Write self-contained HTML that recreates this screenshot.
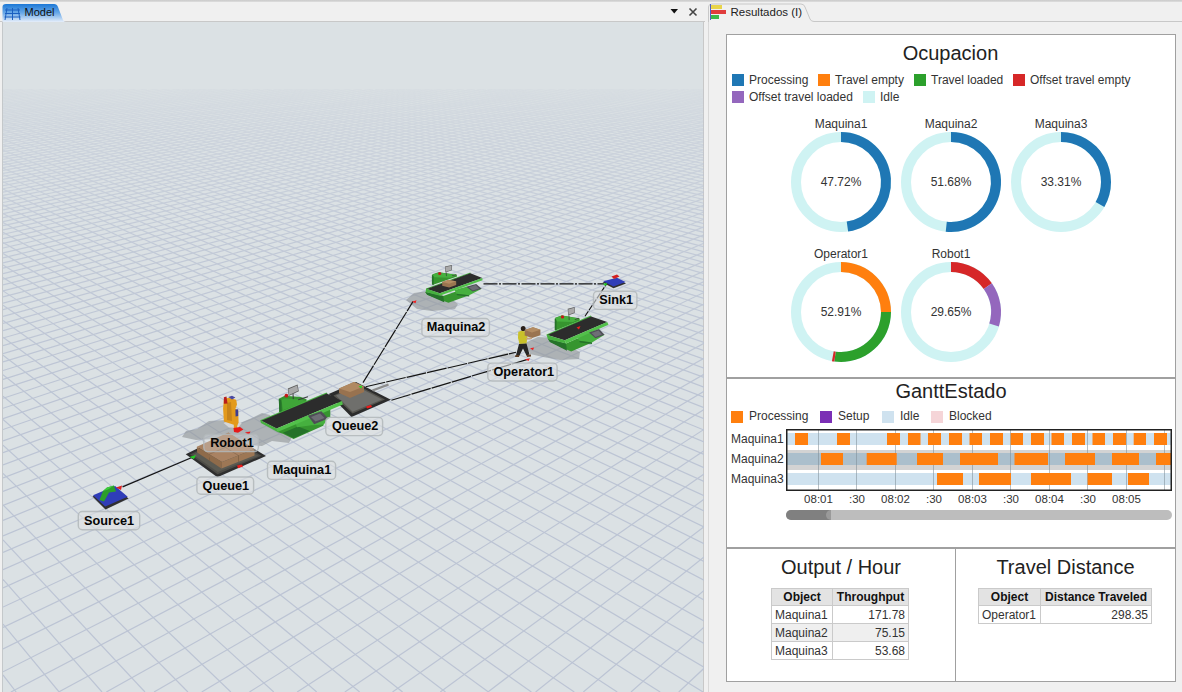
<!DOCTYPE html>
<html><head><meta charset="utf-8"><style>
*{margin:0;padding:0;box-sizing:border-box}
html,body{width:1182px;height:692px;overflow:hidden;background:#f0f0f0;font-family:"Liberation Sans", sans-serif;}
.abs{position:absolute}
</style></head><body>

<div class="abs" style="left:0;top:0;width:1182px;height:2px;background:linear-gradient(#c9c9c9,#dedede)"></div>
<div class="abs" style="left:2px;top:21px;width:702px;height:673px;border:1px solid #c4c8ca;border-right-color:#c8c8c8;background:#dbe1e4;overflow:hidden"></div>
<svg class="abs" style="left:0;top:0" width="1182" height="692" viewBox="0 0 1182 692">
<defs><linearGradient id="fog" x1="0" y1="89" x2="0" y2="692" gradientUnits="userSpaceOnUse"><stop offset="0" stop-color="#fff" stop-opacity="0.12"/><stop offset="0.08" stop-color="#fff" stop-opacity="0.45"/><stop offset="0.25" stop-color="#fff" stop-opacity="0.8"/><stop offset="0.5" stop-color="#fff" stop-opacity="1"/></linearGradient><mask id="fogm"><rect x="0" y="89" width="705" height="603" fill="url(#fog)"/></mask><clipPath id="vp"><rect x="3" y="22" width="701" height="670"/></clipPath></defs>
<g clip-path="url(#vp)"><g mask="url(#fogm)" stroke="#bcc4d4" stroke-width="1.2" fill="none">
<line x1="3.00" y1="90.05" x2="11.51" y2="89.00"/>
<line x1="3.00" y1="91.47" x2="22.81" y2="89.00"/>
<line x1="3.00" y1="92.91" x2="34.10" y2="89.00"/>
<line x1="3.00" y1="94.37" x2="45.40" y2="89.00"/>
<line x1="3.00" y1="95.86" x2="56.69" y2="89.00"/>
<line x1="3.00" y1="97.37" x2="67.99" y2="89.00"/>
<line x1="3.00" y1="98.90" x2="79.28" y2="89.00"/>
<line x1="3.00" y1="100.45" x2="90.58" y2="89.00"/>
<line x1="3.00" y1="102.03" x2="101.88" y2="89.00"/>
<line x1="3.00" y1="103.64" x2="113.17" y2="89.00"/>
<line x1="3.00" y1="105.27" x2="124.47" y2="89.00"/>
<line x1="3.00" y1="106.93" x2="135.76" y2="89.00"/>
<line x1="3.00" y1="108.61" x2="147.06" y2="89.00"/>
<line x1="3.00" y1="110.33" x2="158.35" y2="89.00"/>
<line x1="3.00" y1="112.07" x2="169.65" y2="89.00"/>
<line x1="3.00" y1="113.84" x2="180.94" y2="89.00"/>
<line x1="3.00" y1="115.64" x2="192.24" y2="89.00"/>
<line x1="3.00" y1="117.47" x2="203.54" y2="89.00"/>
<line x1="3.00" y1="119.33" x2="214.83" y2="89.00"/>
<line x1="3.00" y1="121.23" x2="226.13" y2="89.00"/>
<line x1="3.00" y1="123.16" x2="237.42" y2="89.00"/>
<line x1="3.00" y1="125.12" x2="248.72" y2="89.00"/>
<line x1="3.00" y1="127.12" x2="260.01" y2="89.00"/>
<line x1="3.00" y1="129.16" x2="271.31" y2="89.00"/>
<line x1="3.00" y1="131.23" x2="282.61" y2="89.00"/>
<line x1="3.00" y1="133.34" x2="293.90" y2="89.00"/>
<line x1="3.00" y1="135.49" x2="305.20" y2="89.00"/>
<line x1="3.00" y1="137.68" x2="316.49" y2="89.00"/>
<line x1="3.00" y1="139.91" x2="327.79" y2="89.00"/>
<line x1="3.00" y1="142.19" x2="339.08" y2="89.00"/>
<line x1="3.00" y1="144.50" x2="350.38" y2="89.00"/>
<line x1="3.00" y1="146.87" x2="361.67" y2="89.00"/>
<line x1="3.00" y1="149.28" x2="372.97" y2="89.00"/>
<line x1="3.00" y1="151.73" x2="384.27" y2="89.00"/>
<line x1="3.00" y1="154.24" x2="395.56" y2="89.00"/>
<line x1="3.00" y1="156.80" x2="406.86" y2="89.00"/>
<line x1="3.00" y1="159.41" x2="418.15" y2="89.00"/>
<line x1="3.00" y1="162.07" x2="429.45" y2="89.00"/>
<line x1="3.00" y1="164.79" x2="440.74" y2="89.00"/>
<line x1="3.00" y1="167.57" x2="452.04" y2="89.00"/>
<line x1="3.00" y1="170.40" x2="463.33" y2="89.00"/>
<line x1="3.00" y1="173.30" x2="474.63" y2="89.00"/>
<line x1="3.00" y1="176.26" x2="485.93" y2="89.00"/>
<line x1="3.00" y1="179.29" x2="497.22" y2="89.00"/>
<line x1="3.00" y1="182.38" x2="508.52" y2="89.00"/>
<line x1="3.00" y1="185.55" x2="519.81" y2="89.00"/>
<line x1="3.00" y1="188.78" x2="531.11" y2="89.00"/>
<line x1="3.00" y1="192.09" x2="542.40" y2="89.00"/>
<line x1="3.00" y1="195.48" x2="553.70" y2="89.00"/>
<line x1="3.00" y1="198.95" x2="564.99" y2="89.00"/>
<line x1="3.00" y1="202.50" x2="576.29" y2="89.00"/>
<line x1="3.00" y1="206.13" x2="587.59" y2="89.00"/>
<line x1="3.00" y1="209.86" x2="598.88" y2="89.00"/>
<line x1="3.00" y1="213.68" x2="610.18" y2="89.00"/>
<line x1="3.00" y1="217.59" x2="621.47" y2="89.00"/>
<line x1="3.00" y1="221.60" x2="632.77" y2="89.00"/>
<line x1="3.00" y1="225.72" x2="644.06" y2="89.00"/>
<line x1="3.00" y1="229.94" x2="655.36" y2="89.00"/>
<line x1="3.00" y1="234.28" x2="666.66" y2="89.00"/>
<line x1="3.00" y1="238.73" x2="677.95" y2="89.00"/>
<line x1="3.00" y1="243.30" x2="689.25" y2="89.00"/>
<line x1="3.00" y1="248.00" x2="700.54" y2="89.00"/>
<line x1="3.00" y1="252.83" x2="704.00" y2="90.81"/>
<line x1="3.00" y1="257.80" x2="704.00" y2="93.48"/>
<line x1="3.00" y1="262.90" x2="704.00" y2="96.23"/>
<line x1="3.00" y1="268.16" x2="704.00" y2="99.06"/>
<line x1="3.00" y1="273.57" x2="704.00" y2="101.98"/>
<line x1="3.00" y1="279.15" x2="704.00" y2="104.98"/>
<line x1="3.00" y1="284.89" x2="704.00" y2="108.07"/>
<line x1="3.00" y1="290.82" x2="704.00" y2="111.26"/>
<line x1="3.00" y1="296.93" x2="704.00" y2="114.55"/>
<line x1="3.00" y1="303.23" x2="704.00" y2="117.94"/>
<line x1="3.00" y1="309.74" x2="704.00" y2="121.45"/>
<line x1="3.00" y1="316.46" x2="704.00" y2="125.06"/>
<line x1="3.00" y1="323.41" x2="704.00" y2="128.80"/>
<line x1="3.00" y1="330.59" x2="704.00" y2="132.67"/>
<line x1="3.00" y1="338.03" x2="704.00" y2="136.67"/>
<line x1="3.00" y1="345.73" x2="704.00" y2="140.82"/>
<line x1="3.00" y1="353.70" x2="704.00" y2="145.11"/>
<line x1="3.00" y1="361.96" x2="704.00" y2="149.56"/>
<line x1="3.00" y1="370.54" x2="704.00" y2="154.17"/>
<line x1="3.00" y1="379.43" x2="704.00" y2="158.96"/>
<line x1="3.00" y1="388.68" x2="704.00" y2="163.94"/>
<line x1="3.00" y1="398.29" x2="704.00" y2="169.11"/>
<line x1="3.00" y1="408.28" x2="704.00" y2="174.49"/>
<line x1="3.00" y1="418.69" x2="704.00" y2="180.09"/>
<line x1="3.00" y1="429.53" x2="704.00" y2="185.93"/>
<line x1="3.00" y1="440.84" x2="704.00" y2="192.02"/>
<line x1="3.00" y1="452.64" x2="704.00" y2="198.37"/>
<line x1="3.00" y1="464.97" x2="704.00" y2="205.01"/>
<line x1="3.00" y1="477.86" x2="704.00" y2="211.95"/>
<line x1="3.00" y1="491.36" x2="704.00" y2="219.22"/>
<line x1="3.00" y1="505.51" x2="704.00" y2="226.83"/>
<line x1="3.00" y1="520.35" x2="704.00" y2="234.82"/>
<line x1="3.00" y1="535.95" x2="704.00" y2="243.22"/>
<line x1="3.00" y1="552.35" x2="704.00" y2="252.04"/>
<line x1="3.00" y1="569.62" x2="704.00" y2="261.34"/>
<line x1="3.00" y1="674.94" x2="16.15" y2="692.00"/>
<line x1="3.00" y1="587.83" x2="704.00" y2="271.14"/>
<line x1="3.00" y1="624.01" x2="59.08" y2="692.00"/>
<line x1="3.00" y1="607.06" x2="704.00" y2="281.50"/>
<line x1="3.00" y1="579.38" x2="102.02" y2="692.00"/>
<line x1="3.00" y1="627.40" x2="704.00" y2="292.45"/>
<line x1="3.00" y1="539.94" x2="144.95" y2="692.00"/>
<line x1="3.00" y1="648.95" x2="704.00" y2="304.05"/>
<line x1="3.00" y1="504.84" x2="187.89" y2="692.00"/>
<line x1="3.00" y1="671.83" x2="704.00" y2="316.36"/>
<line x1="3.00" y1="473.41" x2="230.83" y2="692.00"/>
<line x1="10.92" y1="692.00" x2="704.00" y2="329.45"/>
<line x1="3.00" y1="445.09" x2="273.76" y2="692.00"/>
<line x1="58.62" y1="692.00" x2="704.00" y2="343.39"/>
<line x1="3.00" y1="419.44" x2="316.70" y2="692.00"/>
<line x1="106.32" y1="692.00" x2="704.00" y2="358.27"/>
<line x1="3.00" y1="396.10" x2="359.63" y2="692.00"/>
<line x1="154.02" y1="692.00" x2="704.00" y2="374.20"/>
<line x1="3.00" y1="374.78" x2="402.57" y2="692.00"/>
<line x1="201.72" y1="692.00" x2="704.00" y2="391.27"/>
<line x1="3.00" y1="355.23" x2="445.51" y2="692.00"/>
<line x1="249.42" y1="692.00" x2="704.00" y2="409.62"/>
<line x1="3.00" y1="337.22" x2="488.44" y2="692.00"/>
<line x1="297.13" y1="692.00" x2="704.00" y2="429.40"/>
<line x1="3.00" y1="320.59" x2="531.38" y2="692.00"/>
<line x1="344.83" y1="692.00" x2="704.00" y2="450.79"/>
<line x1="3.00" y1="305.19" x2="574.31" y2="692.00"/>
<line x1="392.53" y1="692.00" x2="704.00" y2="473.99"/>
<line x1="3.00" y1="290.88" x2="617.25" y2="692.00"/>
<line x1="440.23" y1="692.00" x2="704.00" y2="499.23"/>
<line x1="3.00" y1="277.55" x2="660.19" y2="692.00"/>
<line x1="487.93" y1="692.00" x2="704.00" y2="526.80"/>
<line x1="3.00" y1="265.10" x2="703.12" y2="692.00"/>
<line x1="535.63" y1="692.00" x2="704.00" y2="557.04"/>
<line x1="3.00" y1="253.45" x2="704.00" y2="667.18"/>
<line x1="583.34" y1="692.00" x2="704.00" y2="590.36"/>
<line x1="3.00" y1="242.53" x2="704.00" y2="643.40"/>
<line x1="631.04" y1="692.00" x2="704.00" y2="627.25"/>
<line x1="3.00" y1="232.26" x2="704.00" y2="621.05"/>
<line x1="678.74" y1="692.00" x2="704.00" y2="668.31"/>
<line x1="3.00" y1="222.59" x2="704.00" y2="600.01"/>
<line x1="3.00" y1="213.48" x2="704.00" y2="580.16"/>
<line x1="3.00" y1="204.87" x2="704.00" y2="561.42"/>
<line x1="3.00" y1="196.72" x2="704.00" y2="543.68"/>
<line x1="3.00" y1="189.00" x2="704.00" y2="526.87"/>
<line x1="3.00" y1="181.67" x2="704.00" y2="510.92"/>
<line x1="3.00" y1="174.71" x2="704.00" y2="495.76"/>
<line x1="3.00" y1="168.08" x2="704.00" y2="481.34"/>
<line x1="3.00" y1="161.77" x2="704.00" y2="467.60"/>
<line x1="3.00" y1="155.75" x2="704.00" y2="454.50"/>
<line x1="3.00" y1="150.01" x2="704.00" y2="441.99"/>
<line x1="3.00" y1="144.51" x2="704.00" y2="430.04"/>
<line x1="3.00" y1="139.26" x2="704.00" y2="418.60"/>
<line x1="3.00" y1="134.23" x2="704.00" y2="407.65"/>
<line x1="3.00" y1="129.41" x2="704.00" y2="397.15"/>
<line x1="3.00" y1="124.78" x2="704.00" y2="387.08"/>
<line x1="3.00" y1="120.34" x2="704.00" y2="377.41"/>
<line x1="3.00" y1="116.07" x2="704.00" y2="368.12"/>
<line x1="3.00" y1="111.97" x2="704.00" y2="359.19"/>
<line x1="3.00" y1="108.02" x2="704.00" y2="350.59"/>
<line x1="3.00" y1="104.21" x2="704.00" y2="342.31"/>
<line x1="3.00" y1="100.55" x2="704.00" y2="334.32"/>
<line x1="3.00" y1="97.01" x2="704.00" y2="326.63"/>
<line x1="3.00" y1="93.60" x2="704.00" y2="319.20"/>
<line x1="3.00" y1="90.30" x2="704.00" y2="312.03"/>
<line x1="9.04" y1="89.00" x2="704.00" y2="305.10"/>
<line x1="19.21" y1="89.00" x2="704.00" y2="298.40"/>
<line x1="29.38" y1="89.00" x2="704.00" y2="291.92"/>
<line x1="39.54" y1="89.00" x2="704.00" y2="285.64"/>
<line x1="49.71" y1="89.00" x2="704.00" y2="279.57"/>
<line x1="59.88" y1="89.00" x2="704.00" y2="273.69"/>
<line x1="70.04" y1="89.00" x2="704.00" y2="267.98"/>
<line x1="80.21" y1="89.00" x2="704.00" y2="262.45"/>
<line x1="90.38" y1="89.00" x2="704.00" y2="257.08"/>
<line x1="100.55" y1="89.00" x2="704.00" y2="251.87"/>
<line x1="110.71" y1="89.00" x2="704.00" y2="246.81"/>
<line x1="120.88" y1="89.00" x2="704.00" y2="241.90"/>
<line x1="131.05" y1="89.00" x2="704.00" y2="237.12"/>
<line x1="141.21" y1="89.00" x2="704.00" y2="232.48"/>
<line x1="151.38" y1="89.00" x2="704.00" y2="227.96"/>
<line x1="161.55" y1="89.00" x2="704.00" y2="223.57"/>
<line x1="171.72" y1="89.00" x2="704.00" y2="219.29"/>
<line x1="181.88" y1="89.00" x2="704.00" y2="215.12"/>
<line x1="192.05" y1="89.00" x2="704.00" y2="211.06"/>
<line x1="202.22" y1="89.00" x2="704.00" y2="207.11"/>
<line x1="212.38" y1="89.00" x2="704.00" y2="203.25"/>
<line x1="222.55" y1="89.00" x2="704.00" y2="199.50"/>
<line x1="232.72" y1="89.00" x2="704.00" y2="195.83"/>
<line x1="242.89" y1="89.00" x2="704.00" y2="192.25"/>
<line x1="253.05" y1="89.00" x2="704.00" y2="188.76"/>
<line x1="263.22" y1="89.00" x2="704.00" y2="185.36"/>
<line x1="273.39" y1="89.00" x2="704.00" y2="182.03"/>
<line x1="283.55" y1="89.00" x2="704.00" y2="178.78"/>
<line x1="293.72" y1="89.00" x2="704.00" y2="175.60"/>
<line x1="303.89" y1="89.00" x2="704.00" y2="172.50"/>
<line x1="314.06" y1="89.00" x2="704.00" y2="169.46"/>
<line x1="324.22" y1="89.00" x2="704.00" y2="166.50"/>
<line x1="334.39" y1="89.00" x2="704.00" y2="163.59"/>
<line x1="344.56" y1="89.00" x2="704.00" y2="160.76"/>
<line x1="354.72" y1="89.00" x2="704.00" y2="157.98"/>
<line x1="364.89" y1="89.00" x2="704.00" y2="155.26"/>
<line x1="375.06" y1="89.00" x2="704.00" y2="152.60"/>
<line x1="385.23" y1="89.00" x2="704.00" y2="149.99"/>
<line x1="395.39" y1="89.00" x2="704.00" y2="147.44"/>
<line x1="405.56" y1="89.00" x2="704.00" y2="144.94"/>
<line x1="415.73" y1="89.00" x2="704.00" y2="142.49"/>
<line x1="425.89" y1="89.00" x2="704.00" y2="140.08"/>
<line x1="436.06" y1="89.00" x2="704.00" y2="137.73"/>
<line x1="446.23" y1="89.00" x2="704.00" y2="135.42"/>
<line x1="456.39" y1="89.00" x2="704.00" y2="133.16"/>
<line x1="466.56" y1="89.00" x2="704.00" y2="130.94"/>
<line x1="476.73" y1="89.00" x2="704.00" y2="128.76"/>
<line x1="486.90" y1="89.00" x2="704.00" y2="126.63"/>
<line x1="497.06" y1="89.00" x2="704.00" y2="124.53"/>
<line x1="507.23" y1="89.00" x2="704.00" y2="122.47"/>
<line x1="517.40" y1="89.00" x2="704.00" y2="120.45"/>
<line x1="527.56" y1="89.00" x2="704.00" y2="118.47"/>
<line x1="537.73" y1="89.00" x2="704.00" y2="116.52"/>
<line x1="547.90" y1="89.00" x2="704.00" y2="114.61"/>
<line x1="558.07" y1="89.00" x2="704.00" y2="112.73"/>
<line x1="568.23" y1="89.00" x2="704.00" y2="110.88"/>
<line x1="578.40" y1="89.00" x2="704.00" y2="109.07"/>
<line x1="588.57" y1="89.00" x2="704.00" y2="107.28"/>
<line x1="598.73" y1="89.00" x2="704.00" y2="105.53"/>
<line x1="608.90" y1="89.00" x2="704.00" y2="103.81"/>
<line x1="619.07" y1="89.00" x2="704.00" y2="102.11"/>
<line x1="629.24" y1="89.00" x2="704.00" y2="100.45"/>
<line x1="639.40" y1="89.00" x2="704.00" y2="98.81"/>
<line x1="649.57" y1="89.00" x2="704.00" y2="97.20"/>
<line x1="659.74" y1="89.00" x2="704.00" y2="95.61"/>
<line x1="669.90" y1="89.00" x2="704.00" y2="94.05"/>
<line x1="680.07" y1="89.00" x2="704.00" y2="92.52"/>
<line x1="690.24" y1="89.00" x2="704.00" y2="91.01"/>
<line x1="700.41" y1="89.00" x2="704.00" y2="89.52"/>
</g>
<polygon points="182.0,437.0 186.0,431.0 197.0,429.0 209.0,421.0 226.0,420.0 240.0,423.0 252.0,418.0 262.0,413.0 270.0,415.0 276.0,427.0 292.0,437.0 289.0,443.0 272.0,441.0 262.0,446.0 248.0,445.0 235.0,437.0 214.0,439.0 196.0,440.0" fill="#8e9396" fill-opacity="0.6"/>
<polygon points="406.0,300.0 414.0,293.0 428.0,291.0 448.0,297.0 458.0,304.0 455.0,309.0 432.0,311.0 417.0,309.0" fill="#8e9396" fill-opacity="0.6"/>
<polygon points="525.0,343.0 538.0,337.0 553.0,338.0 568.0,346.0 580.0,352.0 579.0,359.0 560.0,360.0 543.0,357.0 530.0,354.0" fill="#8e9396" fill-opacity="0.6"/>
<polygon points="497.0,356.0 505.0,353.0 514.0,353.0 515.0,357.0 506.0,359.0" fill="#8e9396" fill-opacity="0.35"/>
<line x1="122.6" y1="486.9" x2="192.5" y2="457.2" stroke="#141414" stroke-width="1.15" fill="none"/>
<line x1="363" y1="382.6" x2="413.1" y2="301.4" stroke="#141414" stroke-width="1.15" fill="none" stroke-dasharray="20,1"/>
<line x1="365.7" y1="386.7" x2="516" y2="352.3" stroke="#141414" stroke-width="1.15" fill="none" stroke-dasharray="20,1"/>
<line x1="391.4" y1="400.2" x2="526.8" y2="359.6" stroke="#141414" stroke-width="1.15" fill="none" stroke-dasharray="20,1"/>
<line x1="483.5" y1="283.8" x2="604" y2="283.8" stroke="#141414" stroke-width="1.15" fill="none" stroke-width="1.5" stroke-dasharray="14,1.5,2,1.5"/>
<line x1="585" y1="316.3" x2="606.6" y2="283.8" stroke="#141414" stroke-width="1.15" fill="none" stroke-dasharray="6,1.2"/>
<polygon points="92.5,496.5 115.0,487.0 128.5,498.5 105.5,509.5" fill="#303030" />
<polygon points="93.0,495.2 115.1,486.0 127.7,496.8 105.2,506.5" fill="#2f3db8" />
<polygon points="99.5,500.0 103.0,491.0 107.0,487.5 114.0,485.5 116.0,491.5 109.0,492.5 104.0,501.5" fill="#2b9e2b" />
<polygon points="103.0,491.0 107.0,487.5 114.0,485.5 108.0,489.5" fill="#3ccc3c" />
<polygon points="116.0,487.5 122.0,485.5 121.0,490.0" fill="#e02020" />
<polygon points="185.7,454.2 228.1,433.2 266.0,455.9 217.4,477.3" fill="#2e2e2e" />
<polygon points="190.0,454.6 228.1,436.0 261.5,455.8 217.6,474.3" fill="#4c4b46" />
<polygon points="193.0,454.7 228.1,438.2 258.5,455.8 217.8,472.0" fill="#5b5a52" />
<polygon points="196.8,446.8 228.5,432.5 254.5,449.0 222.0,462.0" fill="#a98262" />
<polygon points="196.8,446.8 222.0,462.0 221.5,468.6 197.2,452.6" fill="#8f6b4a" />
<polygon points="222.0,462.0 254.5,449.0 254.5,455.5 221.5,468.6" fill="#9d7755" />
<line x1="212.5" y1="439.6" x2="238.5" y2="455.5" stroke="#85654a" stroke-width="0.7"/>
<line x1="209" y1="454.3" x2="241.5" y2="440.7" stroke="#85654a" stroke-width="0.7"/>
<line x1="209.5" y1="457.5" x2="209.5" y2="461" stroke="#7a5c40" stroke-width="0.7"/>
<line x1="238.5" y1="455.5" x2="238.5" y2="462" stroke="#7a5c40" stroke-width="0.7"/>
<polygon points="189.5,457.0 196.0,455.0 194.0,459.0" fill="#22cc22" />
<polygon points="237.0,465.5 242.0,464.5 243.0,466.5 238.0,468.2" fill="#ee1a1a" />
<polygon points="223.5,423.0 230.0,420.5 241.8,423.0 238.0,427.9 229.0,427.5" fill="#d6d6d6" />
<polygon points="223.9,399.3 228.7,397.7 236.2,399.7 237.0,404.5 235.4,408.8 238.2,410.4 238.6,422.4 237.0,426.3 233.8,424.7 223.9,421.6 223.1,408.8" fill="#e39a1c" />
<polygon points="227.0,403.0 231.0,402.0 232.0,421.0 227.0,420.0" fill="#c7841a" />
<polygon points="228.3,397.0 232.0,395.8 235.4,397.5 232.0,399.5" fill="#4a48a0" />
<polygon points="223.9,397.2 226.5,396.5 227.5,403.5 223.9,403.7" fill="#b81e1e" />
<polygon points="235.4,409.6 238.2,409.2 238.2,416.0 235.6,416.5" fill="#3e3e90" />
<polygon points="233.8,424.7 237.0,424.5 237.4,430.0 234.0,431.0" fill="#e39a1c" />
<polygon points="233.5,428.0 240.0,427.0 243.4,429.5 238.0,432.7 234.0,432.0" fill="#e61a1a" />
<polygon points="245.0,432.5 250.5,431.5 249.0,434.7" fill="#e61a1a" />
<polygon points="328.7,394.1 356.0,382.1 390.9,399.8 351.5,417.0" fill="#2c2c2c" />
<polygon points="333.5,395.5 357.5,385.3 385.0,399.5 352.5,413.5" fill="#56554f" />
<polygon points="336.0,395.6 357.5,386.8 382.0,399.4 352.6,411.8" fill="#6f6f6c" />
<polygon points="339.0,388.5 354.0,382.0 364.0,386.5 364.0,392.0 350.0,398.0 339.0,393.0" fill="#98724f" />
<polygon points="339.0,388.5 354.0,382.0 364.0,386.5 350.0,392.0" fill="#b08962" />
<polygon points="358.5,386.5 362.0,385.5 361.5,388.5" fill="#22dd22" />
<polygon points="366.0,406.5 371.0,405.0 372.0,407.0 367.0,408.5" fill="#ee1a1a" />
<polygon points="372.0,389.5 388.0,383.5 389.0,385.5 373.0,391.5" fill="#8c8c8c" />
<polygon points="278.8,398.8 284.7,395.7 300.8,397.0 306.5,399.3 306.5,402.0 281.0,413.0 279.3,412.0" fill="#36952f" />
<polygon points="278.8,398.8 281.5,400.0 281.8,412.5 279.3,412.0" fill="#25722a" />
<polygon points="281.5,400.0 284.7,398.5 300.8,399.5 306.5,401.5 283.0,410.0" fill="#46b03f" fill-opacity="0.6"/>
<polygon points="277.5,432.0 282.9,433.7 293.6,439.0 323.2,425.7 324.1,422.1 330.3,417.6 330.3,408.5 277.0,431.0" fill="#36952f" />
<polygon points="282.9,432.8 293.6,438.2 309.7,431.0 298.1,426.6" fill="#25722a" />
<polygon points="294.5,420.5 308.0,415.5 327.6,418.0 324.0,424.5 311.5,425.2 297.0,427.2" fill="#46b03f" />
<polygon points="260.2,420.2 326.5,392.5 327.5,393.8 261.5,421.6" fill="#46b03f" />
<polygon points="261.4,420.7 326.7,393.4 342.0,401.0 276.6,428.4" fill="#2c2c2c" />
<polygon points="276.6,428.4 342.0,401.0 342.9,404.6 277.5,432.0" fill="#52c04a" />
<polygon points="260.2,420.2 261.4,420.7 276.6,428.4 277.5,432.0 261.0,423.0" fill="#46b03f" />
<polygon points="287.8,388.5 297.6,384.5 298.8,391.2 288.7,396.1" fill="#5c5c5c" />
<polygon points="288.4,389.3 297.2,385.6 298.1,390.8 289.1,394.9" fill="#a9a9a9" />
<polygon points="292.5,394.0 293.5,393.6 293.8,399.0 292.8,399.3" fill="#3a3a3a" />
<polygon points="298.1,399.3 307.9,396.3 308.0,397.2 298.3,400.2" fill="#3a3a3a" />
<circle cx="286.4" cy="395.7" r="1.90" fill="#c41a1a"/>
<polygon points="307.9,415.8 321.4,411.3 328.1,418.5 314.2,424.3" fill="#4e4e56" />
<polygon points="311.0,417.0 320.0,413.5 324.5,418.0 315.5,421.5" fill="#6e6e76" />
<polygon points="432.4,274.2 438.9,272.2 445.8,273.2 456.7,274.8 457.1,276.6 433.2,284.8 432.4,284.8" fill="#36952f" />
<polygon points="431.9,274.9 433.7,275.6 433.7,285.0 431.9,284.5" fill="#25722a" />
<polygon points="432.7,274.4 438.9,272.4 445.8,273.3 456.7,275.0 450.2,277.8 434.2,277.3" fill="#46b03f" />
<polygon points="425.2,292.1 427.2,294.7 448.4,302.8 469.2,295.3 467.2,292.3 454.5,291.9 443.2,295.9" fill="#36952f" />
<polygon points="425.2,292.1 443.2,295.9 444.2,302.2 427.2,294.7" fill="#25722a" />
<polygon points="454.5,290.0 466.2,286.8 481.7,288.7 469.2,295.3 456.2,293.8" fill="#46b03f" />
<polygon points="456.2,293.8 469.2,295.3 469.2,296.5 457.2,295.2" fill="#25722a" />
<polygon points="426.1,288.4 470.4,272.6 470.5,273.7 426.4,289.6" fill="#46b03f" />
<polygon points="426.7,288.9 470.4,273.3 482.3,278.0 439.8,293.2" fill="#2c2c2c" />
<polygon points="439.8,293.2 482.3,278.0 482.5,280.2 439.9,295.8" fill="#52c04a" />
<polygon points="426.0,288.6 439.8,293.2 439.9,295.8 425.7,292.1" fill="#46b03f" />
<polygon points="445.8,272.4 446.5,272.2 446.7,276.1 446.0,276.3" fill="#3a3a3a" />
<polygon points="444.9,266.5 451.9,265.1 451.9,270.2 445.4,272.4" fill="#5c5c5c" />
<polygon points="445.4,267.1 451.4,265.8 451.4,269.9 445.8,271.7" fill="#a9a9a9" />
<polygon points="451.9,275.5 456.2,274.3 456.4,275.0 452.1,276.1" fill="#3a3a3a" />
<circle cx="439.7" cy="273.5" r="1.57" fill="#c41a1a"/>
<polygon points="466.2,286.8 476.2,283.9 481.7,288.7 472.7,291.6" fill="#4e4e56" />
<polygon points="468.7,287.2 475.7,285.1 479.1,288.5 472.7,290.6" fill="#6e6e76" />
<polygon points="442.2,282.0 448.2,279.9 456.2,281.2 456.2,285.0 449.2,287.6 442.2,285.8" fill="#9a7550" />
<polygon points="442.2,282.0 448.2,279.9 456.2,281.2 449.2,283.8" fill="#b38c62" />
<polygon points="412.0,301.8 416.5,300.2 415.5,303.2" fill="#ee2020" />
<polygon points="555.2,317.8 561.7,315.4 568.6,316.5 579.5,318.4 579.9,320.5 556.0,330.3 555.2,330.3" fill="#36952f" />
<polygon points="554.7,318.6 556.5,319.5 556.5,330.5 554.7,330.0" fill="#25722a" />
<polygon points="555.5,318.0 561.7,315.6 568.6,316.7 579.5,318.6 573.0,322.0 557.0,321.5" fill="#46b03f" />
<polygon points="548.0,339.0 550.0,342.0 571.2,351.5 592.0,342.5 590.0,339.0 577.3,338.6 566.0,343.4" fill="#36952f" />
<polygon points="548.0,339.0 566.0,343.4 567.0,350.8 550.0,342.0" fill="#25722a" />
<polygon points="577.3,336.4 589.0,332.5 604.6,334.7 592.0,342.5 579.0,340.8" fill="#46b03f" />
<polygon points="579.0,340.8 592.0,342.5 592.0,344.0 580.0,342.5" fill="#25722a" />
<polygon points="546.5,334.5 590.8,315.6 591.5,317.0 547.4,335.9" fill="#46b03f" />
<polygon points="547.4,335.1 591.2,316.5 607.2,322.1 564.7,340.3" fill="#2c2c2c" />
<polygon points="564.7,340.3 607.2,322.1 608.5,324.7 566.0,343.4" fill="#52c04a" />
<polygon points="546.5,334.8 564.7,340.3 566.0,343.4 547.8,339.0" fill="#46b03f" />
<polygon points="568.6,315.6 569.3,315.4 569.5,320.0 568.8,320.2" fill="#3a3a3a" />
<polygon points="567.7,308.7 574.7,306.9 574.7,313.0 568.2,315.6" fill="#5c5c5c" />
<polygon points="568.2,309.4 574.2,307.8 574.2,312.6 568.6,314.8" fill="#a9a9a9" />
<polygon points="574.7,319.2 579.0,317.8 579.2,318.6 574.9,320.0" fill="#3a3a3a" />
<circle cx="562.5" cy="316.9" r="1.70" fill="#c41a1a"/>
<polygon points="589.0,332.5 599.0,329.0 604.6,334.7 595.5,338.2" fill="#4e4e56" />
<polygon points="591.5,333.0 598.5,330.5 602.0,334.5 595.5,337.0" fill="#6e6e76" />
<polygon points="576.5,327.5 580.5,326.0 579.0,329.5" fill="#ee2020" />
<ellipse cx="523.2" cy="328.6" rx="2.4" ry="2.6" fill="#2a2018"/>
<polygon points="518.2,332.0 521.0,330.8 525.5,331.5 527.5,337.0 526.5,343.5 519.5,344.0 518.0,338.0" fill="#c9c12a" />
<polygon points="519.0,344.0 526.5,343.5 529.5,354.5 526.5,355.5 523.0,348.5 519.5,355.5 516.0,355.3" fill="#262626" />
<polygon points="515.5,355.0 519.5,355.0 519.0,357.0 515.0,357.0" fill="#5a3a20" />
<polygon points="526.5,355.0 531.0,354.5 531.0,356.5 527.0,357.0" fill="#5a3a20" />
<polygon points="524.7,330.0 533.0,327.3 540.4,329.8 540.4,335.2 532.0,338.0 524.7,335.5" fill="#9a7450" />
<polygon points="524.7,330.0 533.0,327.3 540.4,329.8 532.0,332.5" fill="#b38c62" />
<polygon points="526.0,338.0 532.0,337.5 532.0,339.0 526.0,339.5" fill="#c9a27a" />
<polygon points="530.0,348.2 534.0,347.5 533.0,350.3" fill="#ee2020" />
<polygon points="525.0,359.2 530.0,358.2 528.5,361.0" fill="#ee2020" />
<polygon points="602.5,282.5 616.9,278.8 626.0,283.5 613.5,288.3" fill="#303030" />
<polygon points="603.1,281.3 616.9,277.8 625.6,282.0 613.5,286.5" fill="#2f3db8" />
<polygon points="611.5,276.5 617.0,274.5 619.5,276.5 614.0,279.0" fill="#d42020" />
<polygon points="603.0,284.0 607.0,283.0 606.0,286.0" fill="#22dd22" />
<rect x="78.3" y="511.5" width="61.39999999999999" height="18.30000000000001" rx="4" fill="#dde1e3" fill-opacity="0.6" stroke="#b2b7ba" stroke-opacity="0.85" stroke-width="1.4"/><text x="84.1" y="524.9" font-size="12.7" font-weight="bold" fill="#050505" font-family='"Liberation Sans", sans-serif'>Source1</text>
<rect x="196.9" y="477.0" width="56.69999999999999" height="17.30000000000001" rx="4" fill="#dde1e3" fill-opacity="0.6" stroke="#b2b7ba" stroke-opacity="0.85" stroke-width="1.4"/><text x="202.6" y="489.6" font-size="12.7" font-weight="bold" fill="#050505" font-family='"Liberation Sans", sans-serif'>Queue1</text>
<rect x="203.8" y="434.2" width="54.599999999999966" height="17.399999999999977" rx="4" fill="#dde1e3" fill-opacity="0.3" stroke="#b2b7ba" stroke-opacity="0.85" stroke-width="1.4"/><text x="210.2" y="446.8" font-size="12.7" font-weight="bold" fill="#050505" font-family='"Liberation Sans", sans-serif'>Robot1</text>
<rect x="267.5" y="461.2" width="68.10000000000002" height="18.19999999999999" rx="4" fill="#dde1e3" fill-opacity="0.6" stroke="#b2b7ba" stroke-opacity="0.85" stroke-width="1.4"/><text x="272.7" y="474.2" font-size="12.7" font-weight="bold" fill="#050505" font-family='"Liberation Sans", sans-serif'>Maquina1</text>
<rect x="325.8" y="417.4" width="56.80000000000001" height="18.19999999999999" rx="4" fill="#dde1e3" fill-opacity="0.6" stroke="#b2b7ba" stroke-opacity="0.85" stroke-width="1.4"/><text x="331.9" y="429.6" font-size="12.7" font-weight="bold" fill="#050505" font-family='"Liberation Sans", sans-serif'>Queue2</text>
<rect x="421.9" y="318.5" width="67.5" height="18.0" rx="4" fill="#dde1e3" fill-opacity="0.6" stroke="#b2b7ba" stroke-opacity="0.85" stroke-width="1.4"/><text x="426.8" y="331.2" font-size="12.7" font-weight="bold" fill="#050505" font-family='"Liberation Sans", sans-serif'>Maquina2</text>
<rect x="487.8" y="363.09999999999997" width="69.30000000000001" height="17.900000000000034" rx="4" fill="#dde1e3" fill-opacity="0.6" stroke="#b2b7ba" stroke-opacity="0.85" stroke-width="1.4"/><text x="493.5" y="375.9" font-size="12.7" font-weight="bold" fill="#050505" font-family='"Liberation Sans", sans-serif'>Operator1</text>
<rect x="593.5" y="291.2" width="43.39999999999998" height="18.19999999999999" rx="4" fill="#dde1e3" fill-opacity="0.6" stroke="#b2b7ba" stroke-opacity="0.85" stroke-width="1.4"/><text x="599.3" y="304.2" font-size="12.7" font-weight="bold" fill="#050505" font-family='"Liberation Sans", sans-serif'>Sink1</text>
</g>
</svg>
<div class="abs" style="left:0;top:21px;width:705px;height:1px;background:#c8c8c8"></div>
<svg class="abs" style="left:0;top:0" width="1182" height="30">
<defs><linearGradient id="tabg" x1="0" y1="0" x2="0" y2="1"><stop offset="0" stop-color="#1c78d6"/><stop offset="0.5" stop-color="#6aa9e8"/><stop offset="1" stop-color="#e6eefa"/></linearGradient></defs>
<path d="M2.5,22 L2.5,7 Q2.5,4 6,4 L54,4 Q57,4 58,7 L63,20 Q64,22 66,22 Z" fill="url(#tabg)"/>
<g stroke="#1a5fc0" stroke-width="1" fill="none"><path d="M5,10 H20 M5,13.5 H20 M4.5,17 H20.5 M7,8 L5,20 M12.5,8 V20 M18,8 L20,20"/></g>
<text x="24.5" y="16" font-size="11" fill="#111" font-family='"Liberation Sans", sans-serif'>Model</text>
<path d="M670.5,9 L678,9 L674.25,13.5 Z" fill="#111"/>
<path d="M689.5,8.5 L696.5,15.5 M696.5,8.5 L689.5,15.5" stroke="#444" stroke-width="1.6"/>
<path d="M708.5,22 L708.5,7 Q708.5,4 712,4 L801,4 Q804,4 805,7 L810,19 Q811,21.5 814,21.5 L1182,21.5" fill="#f0f0f0" stroke="#c8c8c8" stroke-width="1"/>
<rect x="711" y="5" width="11" height="4" fill="#e8d44a"/><rect x="711" y="10" width="15" height="4" fill="#e03c3c"/><rect x="711" y="15" width="8" height="4" fill="#3cb84a"/>
<rect x="710" y="4" width="1" height="16" fill="#5060c0"/>
<text x="730.5" y="16" font-size="11.5" fill="#222" font-family='"Liberation Sans", sans-serif'>Resultados (I)</text>
</svg>
<div class="abs" style="left:708px;top:22px;width:1px;height:670px;background:#d8d8d8"></div>
<div class="abs" style="left:726px;top:34px;width:450px;height:344px;background:#fff;border:1px solid #a0a0a0"></div>
<div class="abs" style="left:726px;top:378px;width:450px;height:170px;background:#fff;border:1px solid #a0a0a0"></div>
<div class="abs" style="left:726px;top:548px;width:230px;height:134px;background:#fff;border:1px solid #a0a0a0"></div>
<div class="abs" style="left:955px;top:548px;width:221px;height:134px;background:#fff;border:1px solid #a0a0a0"></div>
<svg class="abs" style="left:0;top:0" width="1182" height="692" font-family='"Liberation Sans", sans-serif'>
<text x="950.5" y="60" text-anchor="middle" font-size="20" fill="#222">Ocupacion</text>
<rect x="732" y="74" width="12" height="12" fill="#1f77b4"/><text x="749" y="83.5" font-size="12" fill="#333">Processing</text>
<rect x="818" y="74" width="12" height="12" fill="#ff7f0e"/><text x="835" y="83.5" font-size="12" fill="#333">Travel empty</text>
<rect x="914" y="74" width="12" height="12" fill="#2ca02c"/><text x="931" y="83.5" font-size="12" fill="#333">Travel loaded</text>
<rect x="1013" y="74" width="12" height="12" fill="#d62728"/><text x="1030" y="83.5" font-size="12" fill="#333">Offset travel empty</text>
<rect x="732" y="91" width="12" height="12" fill="#9467bd"/><text x="749" y="100.5" font-size="12" fill="#333">Offset travel loaded</text>
<rect x="863" y="91" width="12" height="12" fill="#cff3f3"/><text x="880" y="100.5" font-size="12" fill="#333">Idle</text>
<circle cx="841" cy="182" r="45" fill="none" stroke="#cff3f3" stroke-width="10"/>
<path d="M841.00,132.00 A50,50 0 0 1 848.14,231.49 L846.71,221.59 A40,40 0 0 0 841.00,142.00 Z" fill="#1f77b4"/>
<text x="841" y="127.5" text-anchor="middle" font-size="12" fill="#333">Maquina1</text>
<text x="841" y="186" text-anchor="middle" font-size="12" fill="#333">47.72%</text>
<circle cx="951" cy="182" r="45" fill="none" stroke="#cff3f3" stroke-width="10"/>
<path d="M951.00,132.00 A50,50 0 1 1 945.73,231.72 L946.79,221.78 A40,40 0 1 0 951.00,142.00 Z" fill="#1f77b4"/>
<text x="951" y="127.5" text-anchor="middle" font-size="12" fill="#333">Maquina2</text>
<text x="951" y="186" text-anchor="middle" font-size="12" fill="#333">51.68%</text>
<circle cx="1061" cy="182" r="45" fill="none" stroke="#cff3f3" stroke-width="10"/>
<path d="M1061.00,132.00 A50,50 0 0 1 1104.34,206.94 L1095.67,201.95 A40,40 0 0 0 1061.00,142.00 Z" fill="#1f77b4"/>
<text x="1061" y="127.5" text-anchor="middle" font-size="12" fill="#333">Maquina3</text>
<text x="1061" y="186" text-anchor="middle" font-size="12" fill="#333">33.31%</text>
<circle cx="841" cy="312" r="45" fill="none" stroke="#cff3f3" stroke-width="10"/>
<path d="M841.00,262.00 A50,50 0 0 1 891.00,312.00 L881.00,312.00 A40,40 0 0 0 841.00,272.00 Z" fill="#ff7f0e"/>
<path d="M891.00,312.00 A50,50 0 0 1 834.39,361.56 L835.71,351.65 A40,40 0 0 0 881.00,312.00 Z" fill="#2ca02c"/>
<path d="M834.39,361.56 A50,50 0 0 1 831.91,361.17 L833.73,351.33 A40,40 0 0 0 835.71,351.65 Z" fill="#d62728"/>
<text x="841" y="257.5" text-anchor="middle" font-size="12" fill="#333">Operator1</text>
<text x="841" y="316" text-anchor="middle" font-size="12" fill="#333">52.91%</text>
<circle cx="951" cy="312" r="45" fill="none" stroke="#cff3f3" stroke-width="10"/>
<path d="M951.00,262.00 A50,50 0 0 1 991.91,283.25 L983.73,289.00 A40,40 0 0 0 951.00,272.00 Z" fill="#d62728"/>
<path d="M991.91,283.25 A50,50 0 0 1 998.88,326.40 L989.30,323.52 A40,40 0 0 0 983.73,289.00 Z" fill="#9467bd"/>
<text x="951" y="257.5" text-anchor="middle" font-size="12" fill="#333">Robot1</text>
<text x="951" y="316" text-anchor="middle" font-size="12" fill="#333">29.65%</text>
<text x="951" y="398" text-anchor="middle" font-size="20" fill="#222">GanttEstado</text>
<rect x="731" y="411" width="12" height="12" fill="#ff7f0e"/><text x="749" y="420" font-size="12" fill="#333">Processing</text>
<rect x="820" y="411" width="12" height="12" fill="#7b2fb5"/><text x="838" y="420" font-size="12" fill="#333">Setup</text>
<rect x="882" y="411" width="12" height="12" fill="#cfe2ef"/><text x="900" y="420" font-size="12" fill="#333">Idle</text>
<rect x="931" y="411" width="12" height="12" fill="#f5d5d8"/><text x="949" y="420" font-size="12" fill="#333">Blocked</text>
<rect x="787" y="430" width="384" height="60" fill="#fff"/>
<rect x="787" y="450" width="384" height="20" fill="#d3d3d3"/>
<rect x="787" y="433" width="384" height="12" fill="#cfe2ef"/>
<rect x="787" y="453" width="384" height="12" fill="#abbfcc"/>
<rect x="787" y="473" width="384" height="12" fill="#cfe2ef"/>
<line x1="818.5" y1="430" x2="818.5" y2="490" stroke="#7d8c96" stroke-opacity="0.55" stroke-width="1"/>
<line x1="856.5" y1="430" x2="856.5" y2="490" stroke="#7d8c96" stroke-opacity="0.55" stroke-width="1"/>
<line x1="895.5" y1="430" x2="895.5" y2="490" stroke="#7d8c96" stroke-opacity="0.55" stroke-width="1"/>
<line x1="933.5" y1="430" x2="933.5" y2="490" stroke="#7d8c96" stroke-opacity="0.55" stroke-width="1"/>
<line x1="972.5" y1="430" x2="972.5" y2="490" stroke="#7d8c96" stroke-opacity="0.55" stroke-width="1"/>
<line x1="1010.5" y1="430" x2="1010.5" y2="490" stroke="#7d8c96" stroke-opacity="0.55" stroke-width="1"/>
<line x1="1049.5" y1="430" x2="1049.5" y2="490" stroke="#7d8c96" stroke-opacity="0.55" stroke-width="1"/>
<line x1="1087.5" y1="430" x2="1087.5" y2="490" stroke="#7d8c96" stroke-opacity="0.55" stroke-width="1"/>
<line x1="1126.5" y1="430" x2="1126.5" y2="490" stroke="#7d8c96" stroke-opacity="0.55" stroke-width="1"/>
<line x1="1164.5" y1="430" x2="1164.5" y2="490" stroke="#7d8c96" stroke-opacity="0.55" stroke-width="1"/>
<rect x="795" y="433" width="13" height="12" fill="#ff7f0e"/>
<rect x="837" y="433" width="13" height="12" fill="#ff7f0e"/>
<rect x="887" y="433" width="13" height="12" fill="#ff7f0e"/>
<rect x="908" y="433" width="12.5" height="12" fill="#ff7f0e"/>
<rect x="928" y="433" width="13" height="12" fill="#ff7f0e"/>
<rect x="949" y="433" width="13" height="12" fill="#ff7f0e"/>
<rect x="969.5" y="433" width="12.5" height="12" fill="#ff7f0e"/>
<rect x="990" y="433" width="13" height="12" fill="#ff7f0e"/>
<rect x="1010.7" y="433" width="12.299999999999955" height="12" fill="#ff7f0e"/>
<rect x="1031" y="433" width="13" height="12" fill="#ff7f0e"/>
<rect x="1051.5" y="433" width="12.5" height="12" fill="#ff7f0e"/>
<rect x="1072" y="433" width="13" height="12" fill="#ff7f0e"/>
<rect x="1092.5" y="433" width="12.5" height="12" fill="#ff7f0e"/>
<rect x="1113" y="433" width="13" height="12" fill="#ff7f0e"/>
<rect x="1133.7" y="433" width="12.299999999999955" height="12" fill="#ff7f0e"/>
<rect x="1154" y="433" width="13" height="12" fill="#ff7f0e"/>
<rect x="821" y="453" width="22" height="12" fill="#ff7f0e"/>
<rect x="866.7" y="453" width="30.0" height="12" fill="#ff7f0e"/>
<rect x="917" y="453" width="26" height="12" fill="#ff7f0e"/>
<rect x="960" y="453" width="38" height="12" fill="#ff7f0e"/>
<rect x="1014.5" y="453" width="33.5" height="12" fill="#ff7f0e"/>
<rect x="1065" y="453" width="30" height="12" fill="#ff7f0e"/>
<rect x="1112" y="453" width="27" height="12" fill="#ff7f0e"/>
<rect x="1156" y="453" width="15" height="12" fill="#ff7f0e"/>
<rect x="937" y="473" width="26" height="12" fill="#ff7f0e"/>
<rect x="979" y="473" width="32" height="12" fill="#ff7f0e"/>
<rect x="1031" y="473" width="40" height="12" fill="#ff7f0e"/>
<rect x="1087.6" y="473" width="24.40000000000009" height="12" fill="#ff7f0e"/>
<rect x="1128" y="473" width="21" height="12" fill="#ff7f0e"/>
<rect x="786.75" y="429.75" width="384.5" height="60.5" fill="none" stroke="#222" stroke-width="1.5"/>
<text x="818.5" y="503" text-anchor="middle" font-size="11.5" fill="#333">08:01</text>
<text x="857" y="503" text-anchor="middle" font-size="11.5" fill="#333">:30</text>
<text x="895.5" y="503" text-anchor="middle" font-size="11.5" fill="#333">08:02</text>
<text x="934" y="503" text-anchor="middle" font-size="11.5" fill="#333">:30</text>
<text x="972.5" y="503" text-anchor="middle" font-size="11.5" fill="#333">08:03</text>
<text x="1011" y="503" text-anchor="middle" font-size="11.5" fill="#333">:30</text>
<text x="1049.5" y="503" text-anchor="middle" font-size="11.5" fill="#333">08:04</text>
<text x="1088" y="503" text-anchor="middle" font-size="11.5" fill="#333">:30</text>
<text x="1126.5" y="503" text-anchor="middle" font-size="11.5" fill="#333">08:05</text>
<text x="731" y="443" font-size="12" fill="#333">Maquina1</text>
<text x="731" y="463" font-size="12" fill="#333">Maquina2</text>
<text x="731" y="483" font-size="12" fill="#333">Maquina3</text>
<rect x="786" y="510" width="386" height="10" rx="5" fill="#bdbdbd"/>
<path d="M791,510 H831 V520 H791 A5,5 0 0 1 791,510 Z" fill="#808080"/><path d="M831,510 A5,5 0 0 0 831,520 Z" fill="#9a9a9a"/>
<text x="841" y="573.5" text-anchor="middle" font-size="20" fill="#222">Output / Hour</text>
<text x="1065.5" y="573.5" text-anchor="middle" font-size="20" fill="#222">Travel Distance</text>
</svg>
<table class="abs" style="left:771px;top:588px;border-collapse:collapse;font-size:12px;color:#333"><tr><th style="width:61px;height:17px;border:1px solid #cacaca;background:#e3e3e3;color:#111;font-weight:bold;padding:0 2px;text-align:center">Object</th><th style="width:76px;height:17px;border:1px solid #cacaca;background:#e3e3e3;color:#111;font-weight:bold;padding:0 2px;text-align:center">Throughput</th></tr><tr><td style="height:18px;border:1px solid #cacaca;background:#fff;padding:0 3px;text-align:left">Maquina1</td><td style="height:18px;border:1px solid #cacaca;background:#fff;padding:0 3px;text-align:right">171.78</td></tr><tr><td style="height:18px;border:1px solid #cacaca;background:#efefef;padding:0 3px;text-align:left">Maquina2</td><td style="height:18px;border:1px solid #cacaca;background:#efefef;padding:0 3px;text-align:right">75.15</td></tr><tr><td style="height:18px;border:1px solid #cacaca;background:#fff;padding:0 3px;text-align:left">Maquina3</td><td style="height:18px;border:1px solid #cacaca;background:#fff;padding:0 3px;text-align:right">53.68</td></tr></table>
<table class="abs" style="left:978px;top:588px;border-collapse:collapse;font-size:12px;color:#333"><tr><th style="width:62px;height:17px;border:1px solid #cacaca;background:#e3e3e3;color:#111;font-weight:bold;padding:0 2px;text-align:center">Object</th><th style="width:111px;height:17px;border:1px solid #cacaca;background:#e3e3e3;color:#111;font-weight:bold;padding:0 2px;text-align:center">Distance Traveled</th></tr><tr><td style="height:18px;border:1px solid #cacaca;background:#fff;padding:0 3px;text-align:left">Operator1</td><td style="height:18px;border:1px solid #cacaca;background:#fff;padding:0 3px;text-align:right">298.35</td></tr></table>
</body></html>
